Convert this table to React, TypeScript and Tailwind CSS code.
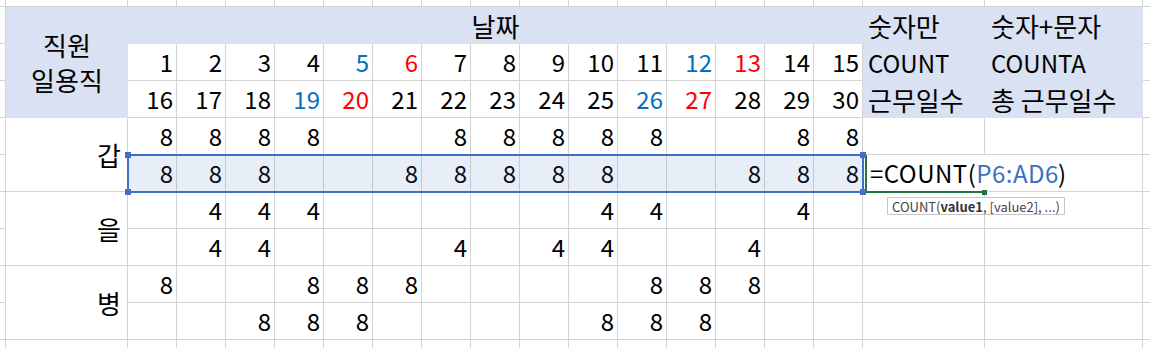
import React from "react";

const LINE = "border-[#d4d4d4]";
const GRID = `border-r border-b ${LINE}`;
const HEAD = "bg-[#d9e1f2]";
const HANGUL = "text-[26px]";

const row1 = Array.from({length: 15}, (_, i) => i + 1);
const row2 = Array.from({length: 15}, (_, i) => i + 16);

const hours: (number | null)[][] = [
    [8, 8, 8, 8, null, null, 8, 8, 8, 8, 8, null, null, 8, 8],
    [8, 8, 8, null, null, 8, 8, 8, 8, 8, null, null, 8, 8, 8],
    [null, 4, 4, 4, null, null, null, null, null, 4, 4, null, null, 4, null],
    [null, 4, 4, null, null, null, 4, null, 4, 4, null, null, 4, null, null],
    [8, null, null, 8, 8, 8, null, null, null, null, 8, 8, 8, null, null],
    [null, null, 8, 8, 8, null, null, null, null, 8, 8, 8, null, null, null]
];

const labels = ["갑", "을", "병"];

// 20 grid columns: gutter, A, 15 days, two summary columns, right gutter
const COLS = 20;

function dayColor(d: number) {
    if ([5, 12, 19, 26].includes(d)) return "text-[#0070c0]";
    if ([6, 13, 20, 27].includes(d)) return "text-[#ff0000]";
    return "text-black";
}

function Filler({prefix, bottom = true}: {prefix: string; bottom?: boolean}) {
    return (
        <>
            {Array.from({length: COLS}).map((_, i) => {
                const last = i === COLS - 1;
                const cls = bottom
                    ? last
                        ? `border-b ${LINE}`
                        : GRID
                    : last
                      ? ""
                      : `border-r ${LINE}`;
                return <div key={`${prefix}${i}`} className={cls} />;
            })}
        </>
    );
}

function FormulaCell() {
    return (
        <div className={`relative flex items-center whitespace-nowrap border-b ${LINE} pl-[7px] tracking-[0.5px]`}>
            <span>=COUNT(</span>
            <span className="text-[#3a6fc4]">P6:AD6</span>
            <span className="-mr-px inline-block h-[39px] w-px bg-black" />
            <span>)</span>
            {/* active cell edge */}
            <div className="absolute left-[2px] top-0 h-[38px] w-[2px] bg-[#217346]" />
            <div className="absolute left-[2px] top-[36px] h-[2px] w-[117px] bg-[#217346]" />
            <div className="absolute left-[119px] top-[35px] size-[5px] bg-[#217346]" />
            {/* argument hint */}
            <div className="absolute left-[24px] top-[42px] flex h-[18px] items-center border border-[#c6c6c6] bg-white px-[4px] text-[13px] tracking-normal text-[#444]">
                COUNT(<b className="font-bold text-[#333]">value1</b>, [value2], ...)
            </div>
        </div>
    );
}

export default function App() {
    return (
        <div className="relative grid h-[348px] w-[1150px] grid-cols-[6px_122px_repeat(15,49px)_122px_158px_7px] grid-rows-[7px_repeat(9,37px)_8px] overflow-hidden bg-white font-['Noto_Sans_CJK_KR',sans-serif] text-[24px] leading-none text-black">
            <Filler prefix="top" />

            {/* header row 1 */}
            <div className={GRID} />
            <div className={`${HEAD} ${HANGUL} row-span-3 flex flex-col items-center justify-center pb-[2px] leading-[35px]`}>
                <span>직원</span>
                <span>일용직</span>
            </div>
            <div className={`${HEAD} ${HANGUL} col-span-15 flex items-center justify-center`}>날짜</div>
            <div className={`${HEAD} ${HANGUL} flex items-center pl-[5px]`}>숫자만</div>
            <div className={`${HEAD} ${HANGUL} flex items-center pl-[6px]`}>숫자+문자</div>
            <div className={`border-b ${LINE}`} />

            {/* header row 2 */}
            <div className={GRID} />
            {row1.map(d => (
                <div key={d} className={`${GRID} flex items-center justify-end pr-[3px] ${dayColor(d)}`}>
                    {d}
                </div>
            ))}
            <div className={`${HEAD} flex items-center pl-[5px]`}>COUNT</div>
            <div className={`${HEAD} flex items-center pl-[6px]`}>COUNTA</div>
            <div className={`border-b ${LINE}`} />

            {/* header row 3 */}
            <div className={GRID} />
            {row2.map(d => (
                <div key={d} className={`${GRID} flex items-center justify-end pr-[3px] ${dayColor(d)}`}>
                    {d}
                </div>
            ))}
            <div className={`${HEAD} ${HANGUL} flex items-center pl-[5px]`}>근무일수</div>
            <div className={`${HEAD} ${HANGUL} flex items-center pl-[6px]`}>총 근무일수</div>
            <div className={`border-b ${LINE}`} />

            {/* data rows */}
            {hours.map((row, r) => (
                <React.Fragment key={r}>
                    <div className={GRID} />
                    {r % 2 === 0 && (
                        <div className={`${GRID} ${HANGUL} row-span-2 flex items-center justify-end pr-[6px]`}>
                            {labels[r / 2]}
                        </div>
                    )}
                    {row.map((v, c) => (
                        <div key={c} className={`${GRID} flex items-center justify-end pr-[3px]`}>
                            {v}
                        </div>
                    ))}
                    {r === 1 ? <FormulaCell /> : <div className={GRID} />}
                    <div className={GRID} />
                    <div className={`border-b ${LINE}`} />
                </React.Fragment>
            ))}

            <Filler prefix="btm" bottom={false} />

            {/* formula reference highlight P6:AD6 */}
            <div className="absolute left-[127px] top-[154px] h-[39px] w-[737px] border-2 border-[#3f6fc6] bg-[rgba(68,114,196,0.12)]">
                <div className="absolute -left-[4px] -top-[4px] size-[6px] bg-[#3f6fc6]" />
                <div className="absolute -right-[4px] -top-[4px] size-[6px] bg-[#3f6fc6]" />
                <div className="absolute -bottom-[4px] -left-[4px] size-[6px] bg-[#3f6fc6]" />
                <div className="absolute -bottom-[4px] -right-[4px] size-[6px] bg-[#3f6fc6]" />
            </div>
        </div>
    );
}
